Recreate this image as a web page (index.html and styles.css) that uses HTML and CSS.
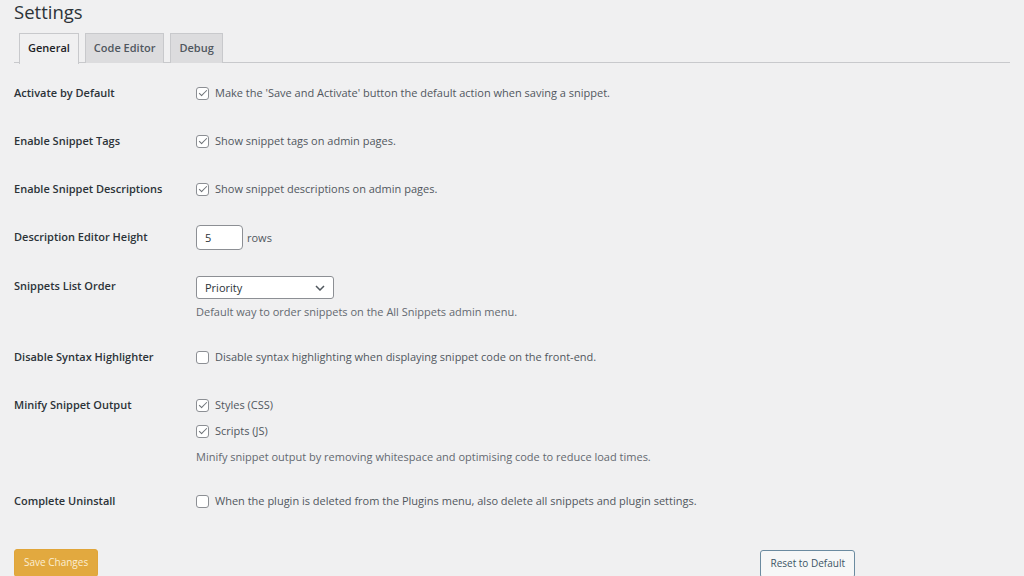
FILE: index.html
```html
<!DOCTYPE html>
<html>
<head>
<meta charset="utf-8">
<link rel="stylesheet" href="styles.css">
</head>
<body>
<div class="wrap">
  <h1 class="title">Settings</h1>
  <nav class="tabs">
    <span class="tab active">General</span>
    <span class="tab">Code Editor</span>
    <span class="tab">Debug</span>
  </nav>

  <div class="form">
    <div class="row">
      <div class="label">Activate by Default</div>
      <div class="field"><label class="check"><span class="cb on"></span>Make the 'Save and Activate' button the default action when saving a snippet.</label></div>
    </div>
    <div class="row">
      <div class="label">Enable Snippet Tags</div>
      <div class="field"><label class="check"><span class="cb on"></span>Show snippet tags on admin pages.</label></div>
    </div>
    <div class="row">
      <div class="label">Enable Snippet Descriptions</div>
      <div class="field"><label class="check"><span class="cb on"></span>Show snippet descriptions on admin pages.</label></div>
    </div>
    <div class="row row-input">
      <div class="label label-input">Description Editor Height</div>
      <div class="field"><span class="num">5</span><span class="unit">rows</span></div>
    </div>
    <div class="row row-select">
      <div class="label label-select">Snippets List Order</div>
      <div class="field">
        <div class="select">Priority<svg class="chev" viewBox="0 0 10 6" width="10" height="6"><path d="M1 1l4 4 4-4" fill="none" stroke="#50575e" stroke-width="1.5"/></svg></div>
        <p class="desc">Default way to order snippets on the All Snippets admin menu.</p>
      </div>
    </div>
    <div class="row">
      <div class="label">Disable Syntax Highlighter</div>
      <div class="field"><label class="check"><span class="cb"></span>Disable syntax highlighting when displaying snippet code on the front-end.</label></div>
    </div>
    <div class="row row-multi">
      <div class="label">Minify Snippet Output</div>
      <div class="field stack">
        <label class="check"><span class="cb on"></span>Styles (CSS)</label>
        <label class="check"><span class="cb on"></span>Scripts (JS)</label>
        <p class="desc">Minify snippet output by removing whitespace and optimising code to reduce load times.</p>
      </div>
    </div>
    <div class="row">
      <div class="label">Complete Uninstall</div>
      <div class="field"><label class="check"><span class="cb"></span>When the plugin is deleted from the Plugins menu, also delete all snippets and plugin settings.</label></div>
    </div>
  </div>

  <div class="actions">
    <span class="btn primary">Save Changes</span>
    <span class="btn secondary">Reset to Default</span>
  </div>
</div>
</body>
</html>
```
FILE: styles.css
```css
* { box-sizing: border-box; }
html, body { margin: 0; padding: 0; background: #f0f0f1; }
body {
  font-family: "Open Sans", "Noto Sans", sans-serif;
  font-size: 11px;
  color: #3c434a;
  width: 1024px;
  height: 576px;
  overflow: hidden;
}
.wrap { padding: 0 14px 0 14px; }
.title {
  margin: 0;
  font-size: 18.5px;
  font-weight: 400;
  line-height: 24px;
  color: #2c3338;
  height: 33px;
}
.tabs {
  display: flex;
  gap: 6px;
  padding-left: 5px;
  width: 996px;
  border-bottom: 1px solid #c8c9cc;
  height: 30px;
}
.tab {
  height: 30px;
  padding: 0 8px;
  line-height: 27px;
  font-weight: 600;
  font-size: 11px;
  color: #50575e;
  background: #dcdcde;
  border: 1px solid #c8c9cc;
  border-bottom: none;
}
.tab.active {
  background: #f0f0f1;
  color: #1d2327;
  margin-bottom: -1px;
  height: 31px;
}
.form { margin-top: 6px; }
.row {
  display: grid;
  grid-template-columns: 182px 1fr;
  padding: 15px 0;
}
.row-input { padding: 12px 0 11px; }
.row-select { padding: 15px 0 12px; }
.row-multi { padding: 15px 0 11px; }
.label {
  font-weight: 600;
  color: #2c3338;
  line-height: 18px;
}
.label-input { line-height: 24px; }
.label-select { line-height: 20px; }
.check {
  display: flex;
  align-items: center;
  line-height: 18px;
  height: 18px;
  color: #50575e;
}
.cb {
  width: 13px;
  height: 13px;
  border: 1px solid #8c8f94;
  border-radius: 3px;
  background: #fff;
  margin-right: 6px;
  flex: none;
  position: relative;
}
.cb.on::after {
  content: "";
  position: absolute;
  left: 3.5px;
  top: 0.5px;
  width: 3px;
  height: 7px;
  border: solid #6c7075;
  border-width: 0 1.5px 1.5px 0;
  transform: rotate(45deg);
}
.field { display: block; }
.num {
  display: inline-block;
  width: 47px;
  height: 25px;
  line-height: 23px;
  padding-left: 8px;
  background: #fff;
  border: 1px solid #8c8f94;
  border-radius: 4px;
  color: #2c3338;
  vertical-align: middle;
}
.unit { margin-left: 4px; vertical-align: middle; color: #50575e; }
.select {
  width: 138px;
  height: 23px;
  line-height: 21px;
  padding: 0 8px;
  background: #fff;
  border: 1px solid #8c8f94;
  border-radius: 3px;
  display: flex;
  align-items: center;
  justify-content: space-between;
  color: #2c3338;
}
.desc {
  margin: 4px 0 0;
  line-height: 18px;
  color: #646970;
}
.stack .check + .check { margin-top: 8px; }
.stack .desc { margin-top: 8px; }
.actions {
  display: flex;
  justify-content: space-between;
  width: 841px;
  margin-top: 24px;
}
.btn {
  display: inline-block;
  height: 28px;
  line-height: 25px;
  padding: 0 9px;
  border-radius: 3px;
  font-size: 10px;
}
.primary {
  background: #e2a93f;
  border: 1px solid #e0a53a;
  color: #fbeed3;
}
.secondary {
  background: #f6f7f7;
  border: 1px solid #6b8ba0;
  color: #3c5566;
  margin-top: 1px;
}
```
